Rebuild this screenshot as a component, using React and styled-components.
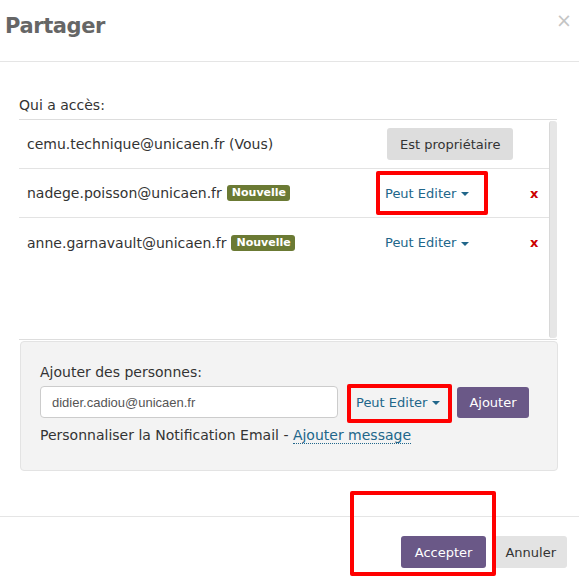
import React from "react";
import styled, { createGlobalStyle } from "styled-components";

const Global = createGlobalStyle`
  html, body { margin: 0; padding: 0; background: #fff; }
  body { font-family: "DejaVu Sans", sans-serif; font-size: 14px; color: #333; }
`;

const Dialog = styled.div`
  position: relative;
  width: 579px;
  height: 584px;
  background: #fff;
  display: flex;
  flex-direction: column;
`;

const Header = styled.div`
  height: 62px;
  border-bottom: 1px solid #e5e5e5;
  display: flex;
  align-items: flex-start;
  justify-content: space-between;
  padding: 14px 6px 0 5px;
  box-sizing: border-box;
`;

const Title = styled.h4`
  margin: 0;
  font-family: "DejaVu Sans", sans-serif;
  font-size: 21px;
  font-weight: 700;
  color: #666;
  letter-spacing: -0.4px;
`;

const Close = styled.span`
  font-size: 19px;
  color: #c4c4c4;
  line-height: 1;
  margin-top: -3px;
  margin-right: 1px;
`;

const Body = styled.div`
  padding: 35px 22px 0 19px;
  display: flex;
  flex-direction: column;
`;

const Label = styled.div`
  font-size: 14px;
  color: #333;
  margin-bottom: 6px;
`;

const ListBox = styled.div`
  height: 219px;
  border-top: 1px solid #ddd;
  border-bottom: 1px solid #ddd;
  display: flex;
`;

const List = styled.div`
  flex: 1;
  display: flex;
  flex-direction: column;
`;

const Scrollbar = styled.div`
  width: 7px;
  background: #e6e6e6;
  border-left: 1px solid #d8d8d8;
  border-radius: 3px;
  margin: 1px 0 1px 0;
`;

const Row = styled.div`
  height: 49px;
  box-sizing: border-box;
  display: flex;
  align-items: center;
  padding-left: 8px;
  border-bottom: ${(p) => (p.$last ? "none" : "1px solid #e3e3e3")};
`;

const Email = styled.div`
  flex: 1;
  display: flex;
  align-items: center;
  gap: 5px;
  color: #333;
`;

const Badge = styled.span`
  background: #6b7a34;
  color: #fff;
  font-weight: 700;
  font-size: 11px;
  padding: 2px 4px 2px 5px;
  border-radius: 3px;
  line-height: 12px;
`;

const Role = styled.div`
  width: 142px;
  display: flex;
  align-items: center;
`;

const DeleteCell = styled.div`
  width: 19px;
  color: #c00;
  font-weight: 700;
  font-size: 13px;
  text-align: left;
  padding-left: 3px;
`;

const GreyButton = styled.button`
  font-family: "DejaVu Sans", sans-serif;
  font-size: 13px;
  color: #333;
  background: #ddd;
  border: none;
  border-radius: 3px;
  height: 32px;
  padding: 0 13px;
  margin-left: 2px;
`;

const Dropdown = styled.span`
  color: #21668a;
  font-size: 13px;
  display: inline-flex;
  align-items: center;
  gap: 5px;
  margin-left: ${(p) => p.$offset || 0}px;
`;

const Caret = styled.span`
  width: 0;
  height: 0;
  border-left: 4px solid transparent;
  border-right: 4px solid transparent;
  border-top: 4px solid #21668a;
  margin-top: 2px;
`;

const AddPanel = styled.div`
  margin-top: 1px;
  margin-right: -1px;
  margin-left: 1px;
  height: 130px;
  background: #f3f3f3;
  border: 1px solid #e3e3e3;
  border-radius: 4px;
  padding: 22px 19px 0 19px;
  box-sizing: border-box;
  display: flex;
  flex-direction: column;
`;

const AddRow = styled.div`
  display: flex;
  align-items: center;
  margin-top: 6px;
  height: 32px;
`;

const Input = styled.div`
  width: 298px;
  height: 32px;
  box-sizing: border-box;
  background: #fff;
  border: 1px solid #ccc;
  border-radius: 4px;
  font-family: "Liberation Sans", Arial, sans-serif;
  font-size: 13px;
  color: #555;
  display: flex;
  align-items: center;
  padding-left: 11px;
`;

const PurpleButton = styled.button`
  font-family: "DejaVu Sans", sans-serif;
  font-size: 13px;
  color: #fff;
  background: #6a5887;
  border: none;
  border-radius: 3px;
  height: ${(p) => p.$h || 32}px;
  padding: 0 ${(p) => p.$px || 13}px;
  margin-left: ${(p) => p.$ml || 0}px;
`;

const Notify = styled.div`
  margin-top: 9px;
  font-size: 14px;
  color: #333;
`;

const DottedLink = styled.span`
  color: #21668a;
  border-bottom: 1px dotted #21668a;
`;

const Footer = styled.div`
  margin-top: auto;
  height: 68px;
  border-top: 1px solid #e5e5e5;
  display: flex;
  justify-content: flex-end;
  align-items: flex-start;
  padding: 19px 12px 0 0;
  box-sizing: border-box;
  gap: 8px;
`;

const LightButton = styled.button`
  font-family: "DejaVu Sans", sans-serif;
  font-size: 13px;
  color: #333;
  background: #e3e3e3;
  border: none;
  border-radius: 3px;
  height: 32px;
  padding: 0 11px;
`;

const Highlight = styled.div`
  position: absolute;
  border: 4px solid #f00;
  border-radius: 2px;
  box-sizing: border-box;
  pointer-events: none;
`;

const rows = [
  { email: "cemu.technique@unicaen.fr (Vous)", owner: true },
  { email: "nadege.poisson@unicaen.fr", badge: true },
  { email: "anne.garnavault@unicaen.fr", badge: true },
];

export default function App() {
  return (
    <>
      <Global />
      <Dialog>
        <Header>
          <Title>Partager</Title>
          <Close>×</Close>
        </Header>
        <Body>
          <Label>Qui a accès:</Label>
          <ListBox>
            <List>
              {rows.map((r, i) => (
                <Row key={r.email} $last={i === rows.length - 1}>
                  <Email>
                    {r.email}
                    {r.badge && <Badge>Nouvelle</Badge>}
                  </Email>
                  <Role>
                    {r.owner ? (
                      <GreyButton>Est propriétaire</GreyButton>
                    ) : (
                      <Dropdown>
                        Peut Editer <Caret />
                      </Dropdown>
                    )}
                  </Role>
                  <DeleteCell>{r.owner ? "" : "x"}</DeleteCell>
                </Row>
              ))}
            </List>
            <Scrollbar />
          </ListBox>
          <AddPanel>
            <div>Ajouter des personnes:</div>
            <AddRow>
              <Input>didier.cadiou@unicaen.fr</Input>
              <Dropdown $offset={18}>
                Peut Editer <Caret />
              </Dropdown>
              <PurpleButton $ml={17} $h={31} $px={12}>Ajouter</PurpleButton>
            </AddRow>
            <Notify>
              Personnaliser la Notification Email - <DottedLink>Ajouter message</DottedLink>
            </Notify>
          </AddPanel>
        </Body>
        <Footer>
          <PurpleButton $px={14}>Accepter</PurpleButton>
          <LightButton>Annuler</LightButton>
        </Footer>
        <Highlight style={{ left: 376, top: 171, width: 112, height: 44 }} />
        <Highlight style={{ left: 347, top: 384, width: 105, height: 39 }} />
        <Highlight style={{ left: 350, top: 491, width: 146, height: 85 }} />
      </Dialog>
    </>
  );
}
